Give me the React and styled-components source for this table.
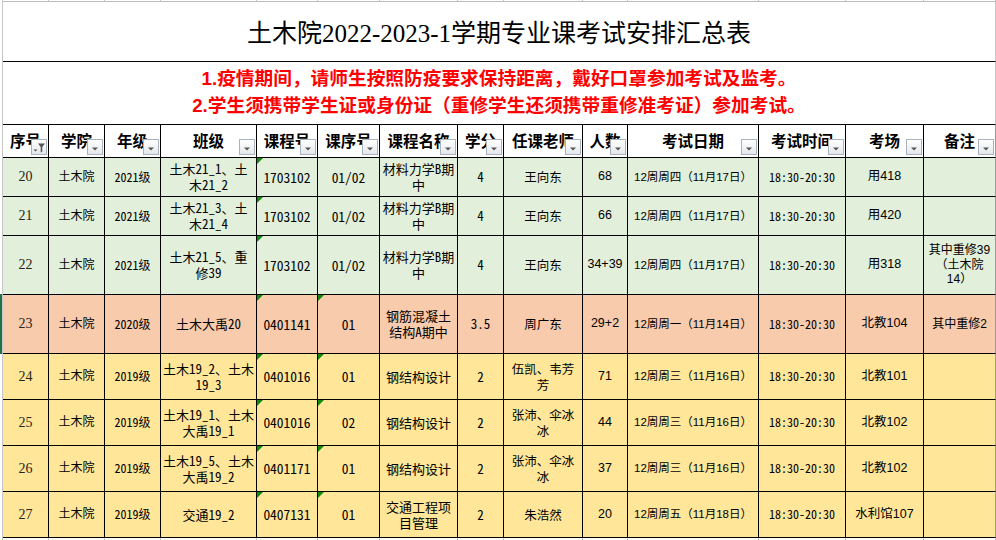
import React from 'react';
import styled, { createGlobalStyle } from 'styled-components';

const serif = '"Liberation Serif", "Noto Sans CJK SC", serif';
const sans = '"Liberation Sans", "Noto Sans CJK SC", sans-serif';
const mono = '"Noto Sans Mono CJK SC", "Liberation Mono", "Noto Sans CJK SC", monospace';
const cjk = '"Noto Sans CJK SC", sans-serif';

const GlobalStyle = createGlobalStyle`
  html, body {
    margin: 0;
    padding: 0;
    background: #fff;
    overflow: hidden;
  }
  body {
    font-family: ${cjk};
    color: #000;
  }
`;

const COLS = [
  { key: 'no', title: '序号', w: 46, font: serif, size: 14, filtered: true },
  { key: 'school', title: '学院', w: 56, font: sans, size: 12 },
  { key: 'grade', title: '年级', w: 56, font: mono, size: 12 },
  { key: 'cls', title: '班级', w: 96, font: mono, size: 13 },
  { key: 'code', title: '课程号', w: 61, font: mono, size: 13.5, tri: true },
  { key: 'seq', title: '课序号', w: 62, font: mono, size: 13.5 },
  { key: 'name', title: '课程名称', w: 78, font: mono, size: 13 },
  { key: 'credit', title: '学分', w: 46, font: mono, size: 13 },
  { key: 'teacher', title: '任课老师', w: 79, font: cjk, size: 12.5 },
  { key: 'num', title: '人数', w: 45, font: sans, size: 12.5 },
  { key: 'date', title: '考试日期', w: 131, font: sans, size: 11.5 },
  { key: 'time', title: '考试时间', w: 87, font: mono, size: 12 },
  { key: 'room', title: '考场', w: 78, font: sans, size: 12.5 },
  { key: 'note', title: '备注', w: 72, font: sans, size: 12 },
];

const TEMPLATE = COLS.map((c) => `${c.w}px`).join(' ');

const BG = {
  green: '#e2efda',
  orange: '#f8cbad',
  yellow: '#ffe699',
  white: '#ffffff',
};

const ROWS = [
  { no: '20', bg: 'green', h: 39, school: '土木院', grade: '2021级', cls: '土木21_1、土\n木21_2', code: '1703102', seq: '01/02', name: '材料力学B期\n中', credit: '4', teacher: '王向东', num: '68', date: '12周周四（11月17日）', time: '18:30-20:30', room: '用418', note: '' },
  { no: '21', bg: 'green', h: 39, school: '土木院', grade: '2021级', cls: '土木21_3、土\n木21_4', code: '1703102', seq: '01/02', name: '材料力学B期\n中', credit: '4', teacher: '王向东', num: '66', date: '12周周四（11月17日）', time: '18:30-20:30', room: '用420', note: '' },
  { no: '22', bg: 'green', h: 59, school: '土木院', grade: '2021级', cls: '土木21_5、重\n修39', code: '1703102', seq: '01/02', name: '材料力学B期\n中', credit: '4', teacher: '王向东', num: '34+39', date: '12周周四（11月17日）', time: '18:30-20:30', room: '用318', note: '其中重修39\n（土木院\n14）' },
  { no: '23', bg: 'orange', h: 59, selected: true, seqTri: true, school: '土木院', grade: '2020级', cls: '土木大禹20', code: '0401141', seq: '01', name: '钢筋混凝土\n结构A期中', credit: '3.5', teacher: '周广东', num: '29+2', date: '12周周一（11月14日）', time: '18:30-20:30', room: '北教104', note: '其中重修2' },
  { no: '24', bg: 'yellow', h: 46, seqTri: true, school: '土木院', grade: '2019级', cls: '土木19_2、土木\n19_3', code: '0401016', seq: '01', name: '钢结构设计', credit: '2', teacher: '伍凯、韦芳\n芳', num: '71', date: '12周周三（11月16日）', time: '18:30-20:30', room: '北教101', note: '' },
  { no: '25', bg: 'yellow', h: 46, seqTri: true, school: '土木院', grade: '2019级', cls: '土木19_1、土木\n大禹19_1', code: '0401016', seq: '02', name: '钢结构设计', credit: '2', teacher: '张沛、伞冰\n冰', num: '44', date: '12周周三（11月16日）', time: '18:30-20:30', room: '北教102', note: '' },
  { no: '26', bg: 'yellow', h: 46, seqTri: true, school: '土木院', grade: '2019级', cls: '土木19_5、土木\n大禹19_2', code: '0401171', seq: '01', name: '钢结构设计', credit: '2', teacher: '张沛、伞冰\n冰', num: '37', date: '12周周三（11月16日）', time: '18:30-20:30', room: '北教102', note: '' },
  { no: '27', bg: 'yellow', h: 46, seqTri: true, school: '土木院', grade: '2019级', cls: '交通19_2', code: '0407131', seq: '01', name: '交通工程项\n目管理', credit: '2', teacher: '朱浩然', num: '20', date: '12周周五（11月18日）', time: '18:30-20:30', room: '水利馆107', note: '' },
];

const Sheet = styled.div`
  margin-left: 2px;
  width: 994px;
  border-left: 1px solid #c6c6c6;
  box-sizing: border-box;
`;

const Strip = styled.div`
  display: grid;
  grid-template-columns: ${TEMPLATE};
  height: ${(p) => p.$h}px;
  border-bottom: ${(p) => (p.$line ? '1px solid #bdbdbd' : 'none')};
`;

const StripCell = styled.div`
  border-right: 1px solid #c6c6c6;
`;

const TitleRow = styled.div`
  display: flex;
  align-items: center;
  justify-content: center;
  height: 60px;
  box-sizing: border-box;
  border-bottom: 1px solid #000;
  border-right: 1px solid #c6c6c6;
  padding-bottom: 2px;
`;

const Title = styled.h1`
  margin: 0;
  font-family: ${serif};
  font-weight: 400;
  font-size: 25px;
  letter-spacing: 0;
  color: #000;
`;

const NotesRow = styled.div`
  display: flex;
  flex-direction: column;
  align-items: center;
  justify-content: center;
  height: 63px;
  box-sizing: border-box;
  border-bottom: 1px solid #000;
  border-right: 1px solid #c6c6c6;
  padding-bottom: 3px;
`;

const Note = styled.p`
  margin: 0;
  font-family: ${sans};
  font-weight: 700;
  font-size: 18.7px;
  line-height: 27px;
  color: #ff0000;
`;

const Row = styled.div`
  position: relative;
  display: grid;
  grid-template-columns: ${TEMPLATE};
  height: ${(p) => p.$h}px;
  background: ${(p) => BG[p.$bg]};

  &::before {
    content: '';
    display: ${(p) => (p.$selected ? 'block' : 'none')};
    position: absolute;
    left: -3px;
    top: -1px;
    bottom: 0;
    width: 2px;
    background: #217346;
  }
`;

const Cell = styled.div`
  position: relative;
  display: flex;
  align-items: center;
  justify-content: center;
  text-align: center;
  white-space: pre;
  overflow: hidden;
  box-sizing: border-box;
  border-right: 1px solid ${(p) => (p.$last ? '#9a9a9a' : '#000')};
  border-bottom: 1px solid #000;
  font-family: ${(p) => p.$font};
  font-size: ${(p) => p.$size}px;
  line-height: 1.22;
  color: ${(p) => p.$color || '#000'};
`;

const HeadCell = styled(Cell)`
  font-family: ${cjk};
  font-weight: 700;
  font-size: 15.5px;
  padding-bottom: 2px;
`;

const FilterBtn = styled.span`
  position: absolute;
  right: 1px;
  bottom: 2px;
  width: 16px;
  height: 16px;
  box-sizing: border-box;
  border: 1px solid #a9b2bd;
  background: linear-gradient(#ffffff, #e4e7eb);
  display: flex;
  align-items: center;
  justify-content: center;

  svg {
    display: block;
  }
`;

const Corner = styled.span`
  position: absolute;
  top: 0;
  left: 0;
  width: 0;
  height: 0;
  border-top: 6px solid #128a12;
  border-right: 6px solid transparent;
`;

const Filter = ({ active }) => (
  <FilterBtn>
    {active ? (
      <svg width="14" height="14" viewBox="0 0 14 14">
        <path d="M6 3.5 H13 L10.3 7 V11.5 L8.7 12.5 V7 Z" fill="#555" />
        <path d="M1.5 9.5 H5.5 L3.5 11.5 Z" fill="#555" />
      </svg>
    ) : (
      <svg width="14" height="14" viewBox="0 0 14 14">
        <path d="M4 7.5 H10 L7 10.5 Z" fill="#555" />
      </svg>
    )}
  </FilterBtn>
);

const GridStrip = ({ h, line }) => (
  <Strip $h={h} $line={line}>
    {COLS.map((c) => (
      <StripCell key={c.key} />
    ))}
  </Strip>
);

const App = () => {
  return (
    <>
      <GlobalStyle />
      <Sheet>
        <GridStrip h={1} line />
        <TitleRow>
          <Title>土木院2022-2023-1学期专业课考试安排汇总表</Title>
        </TitleRow>
        <NotesRow>
          <Note>1.疫情期间，请师生按照防疫要求保持距离，戴好口罩参加考试及监考。</Note>
          <Note>2.学生须携带学生证或身份证（重修学生还须携带重修准考证）参加考试。</Note>
        </NotesRow>
        <Row $h={33} $bg="white">
          {COLS.map((c, i) => (
            <HeadCell key={c.key} $last={i === COLS.length - 1} $size={15.5}>
              {c.title}
              <Filter active={c.filtered} />
            </HeadCell>
          ))}
        </Row>
        {ROWS.map((r) => (
          <Row key={r.no} $h={r.h} $bg={r.bg} $selected={r.selected}>
            {COLS.map((c, i) => (
              <Cell
                key={c.key}
                $font={c.font}
                $size={c.size}
                $last={i === COLS.length - 1}
                $color={c.key === 'no' ? '#2a2418' : undefined}
              >
                {(c.tri || (c.key === 'seq' && r.seqTri)) && <Corner />}
                {r[c.key]}
              </Cell>
            ))}
          </Row>
        ))}
        <GridStrip h={3} />
      </Sheet>
    </>
  );
};

export default App;
